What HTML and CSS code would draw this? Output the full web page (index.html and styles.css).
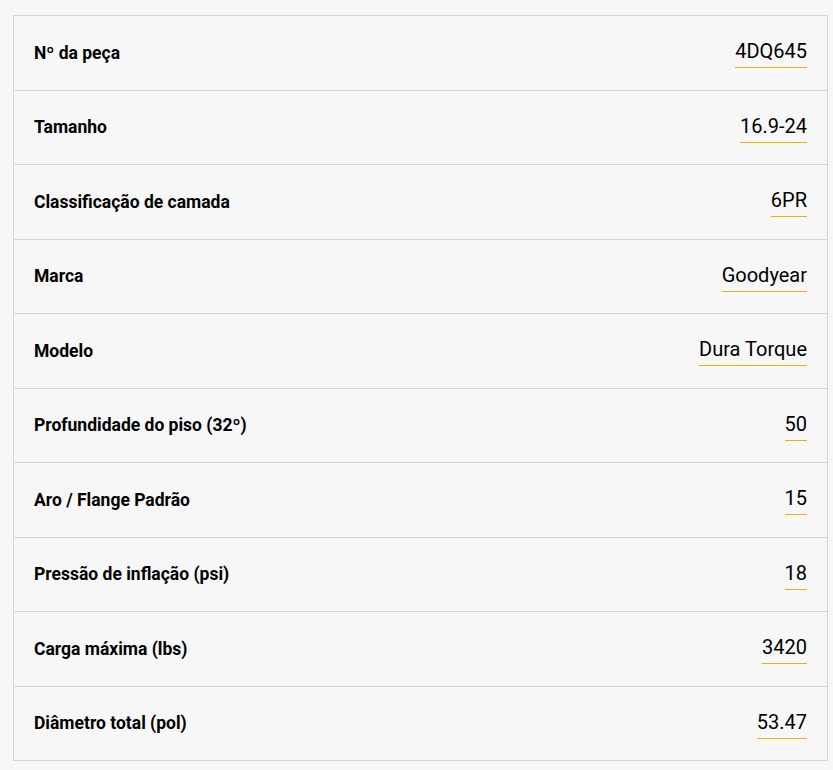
FILE: index.html
```html
<!DOCTYPE html>
<html lang="pt">
<head>
<meta charset="utf-8">
<title>Especificações</title>
<link rel="stylesheet" href="styles.css">
</head>
<body>
<div class="specs">
  <div class="row"><span class="label">Nº da peça</span><span class="value">4DQ645</span></div>
  <div class="row"><span class="label">Tamanho</span><span class="value">16.9-24</span></div>
  <div class="row"><span class="label">Classificação de camada</span><span class="value">6PR</span></div>
  <div class="row"><span class="label">Marca</span><span class="value">Goodyear</span></div>
  <div class="row"><span class="label">Modelo</span><span class="value">Dura Torque</span></div>
  <div class="row"><span class="label">Profundidade do piso (32º)</span><span class="value">50</span></div>
  <div class="row"><span class="label">Aro / Flange Padrão</span><span class="value">15</span></div>
  <div class="row"><span class="label">Pressão de inflação (psi)</span><span class="value">18</span></div>
  <div class="row"><span class="label">Carga máxima (lbs)</span><span class="value">3420</span></div>
  <div class="row"><span class="label">Diâmetro total (pol)</span><span class="value">53.47</span></div>
</div>
</body>
</html>
```
FILE: styles.css
```css
html, body {
  background: #f7f7f7;
}
body {
  margin: 0;
  padding: 15px 5px 9px 13px;
  font-family: Roboto, "Liberation Sans", Arial, sans-serif;
  color: #111;
}
.specs {
  border: 1px solid #d6d6d6;
  border-bottom: none;
  background: #f7f7f7;
}
.row {
  display: flex;
  justify-content: space-between;
  align-items: center;
  height: 73.5px;
  padding: 0 20px;
  border-bottom: 1px solid #d6d6d6;
}
.label {
  font-size: 17.5px;
  font-weight: 700;
  color: #000;
}
.value {
  font-size: 20px;
  color: #000;
  padding-top: 2px;
  padding-bottom: 4px;
  border-bottom: 1px solid #f2b100;
}
```
